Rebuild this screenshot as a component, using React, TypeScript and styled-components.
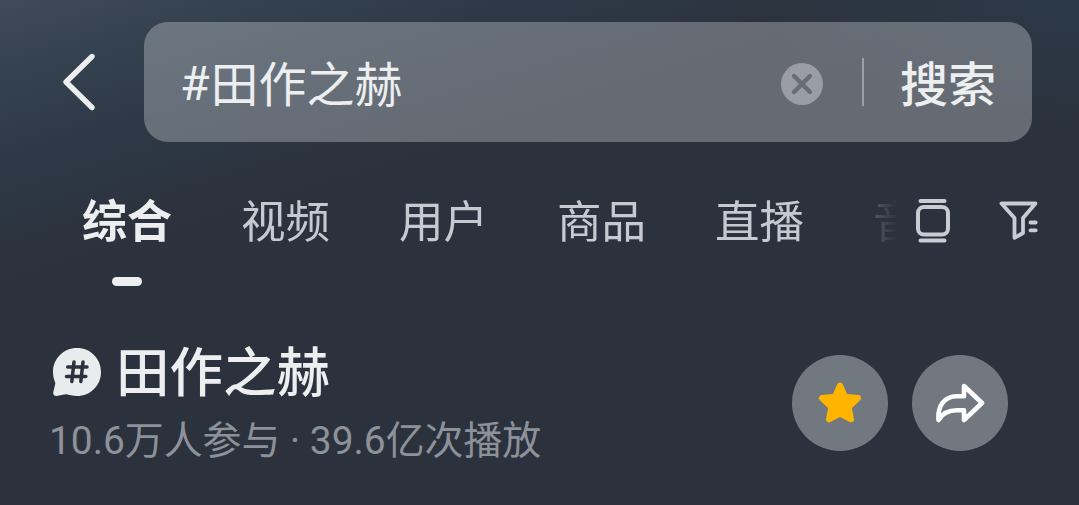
import styled, { createGlobalStyle } from "styled-components";

const tabs = ["综合", "视频", "用户", "商品", "直播", "音"]

function App() {
  const activeTab = 0;

  return (
    <Page>
      <GlobalStyle />
      <SearchRow>
        <BackButton aria-label="返回">
          <svg width="36" height="60" viewBox="0 0 36 60" fill="none" stroke="#eceef0" strokeWidth="5.4" strokeLinecap="round" strokeLinejoin="round">
            <path d="M32 4.5 6 30 32 55.5" />
          </svg>
        </BackButton>
        <SearchBox>
          <Keyword><Hash>#</Hash>田作之赫</Keyword>
          <ClearButton aria-label="清除">
            <svg width="42" height="42" viewBox="0 0 42 42" fill="none">
              <circle cx="21" cy="21" r="21" fill="#9a9da6" />
              <path d="M13 13 29 29M29 13 13 29" stroke="#676d76" strokeWidth="4.4" strokeLinecap="round" />
            </svg>
          </ClearButton>
          <Divider />
          <SearchButton>搜索</SearchButton>
        </SearchBox>
      </SearchRow>

      <TabRow>
        <TabList>
          {tabs.map((tab, index) => (
            <Tab key={tab} $active={index === activeTab}>{tab}</Tab>
          ))}
        </TabList>
        <TabTools>
          <svg width="36" height="46" viewBox="0 0 36 46" fill="none" stroke="#c9ccd2" strokeWidth="4">
            <path d="M5.5 3H29.5M5.5 42.6H29.5" strokeLinecap="round" />
            <rect x="3" y="9" width="30" height="27.6" rx="6" />
          </svg>
          <svg width="42" height="42" viewBox="0 0 42 42" fill="none" stroke="#c9ccd2" strokeWidth="3.8" strokeLinecap="round" strokeLinejoin="round">
            <path d="M3.5 3.5H37.5L25 18V33L16.5 37.8V18Z" />
            <path d="M32.5 22.5H37.7M32.5 30.3H37.7" />
          </svg>
        </TabTools>
      </TabRow>

      <TopicRow>
        <TopicInfo>
          <TopicTitle>
            <svg width="50" height="50" viewBox="0 0 50 50">
              <path d="M25 1C38.5 1 49 11.5 49 25S38.5 49 25 49C20.5 49 17 47.7 14.5 47.2C11.5 47.3 8 48.6 4.5 49C2 49.1 .8 47.2 1.3 45C1.9 42 3.2 38.5 3.3 36C1.9 32.5 1 29 1 25C1 11.5 11.5 1 25 1Z" fill="#e9ebed" />
              <path d="M22 15 19.8 34.5M31 15 28.8 34.5M15.7 20H35M14.5 29.5H33.8" fill="none" stroke="#2b323d" strokeWidth="3.5" strokeLinecap="round" />
            </svg>
            <h1>田作之赫</h1>
          </TopicTitle>
          <TopicStats>10.6万人参与 · 39.6亿次播放</TopicStats>
        </TopicInfo>
        <TopicActions>
          <RoundButton aria-label="收藏">
            <svg width="44" height="44" viewBox="0 0 44 44" fill="#ffb400" stroke="#ffb400" strokeWidth="6" strokeLinejoin="round">
              <path d="M22 4.5 27 15.8 40 17 30.6 26.2 33 38.3 22 32.5 11 38.3 13.4 26.2 4 17 17 15.8Z" />
            </svg>
          </RoundButton>
          <RoundButton aria-label="分享">
            <svg width="50" height="42" viewBox="0 0 50 42" fill="none" stroke="#fff" strokeWidth="4.6" strokeLinejoin="round" strokeLinecap="round">
              <path d="M29 4 47 21 29 38V28.3H22C14 28.3 7.5 31 3.5 38C2.5 24 9 14.3 22 14.3H29Z" />
            </svg>
          </RoundButton>
        </TopicActions>
      </TopicRow>
    </Page>
  )
}

const GlobalStyle = createGlobalStyle`
  * {
    box-sizing: border-box;
  }

  body {
    margin: 0;
    background: #2b323d;
  }

  button {
    padding: 0;
    border: none;
    background: none;
    color: inherit;
    font: inherit;
  }

  svg {
    display: block;
    flex: none;
  }
`;

const Page = styled.div`
  width: 100%;
  height: 505px;
  padding-top: 22px;
  overflow: hidden;
  display: flex;
  flex-direction: column;
  font-family: Roboto, "Noto Sans CJK SC", sans-serif;
  color: #eceef0;
  white-space: nowrap;
  background:
    radial-gradient(ellipse 330px 130px at 100% 0, #2b3947 0%, rgba(43, 57, 71, 0) 100%),
    linear-gradient(163deg, #3f4a5b 0, #35424f 70px, #2d3947 155px, #2c333f 240px, #2b323d 330px);
`;

const SearchRow = styled.div`
  height: 120px;
  display: flex;
  align-items: center;
  padding: 0 47px 0 60px;
`;

const BackButton = styled.button`
  width: 84px;
`;

const SearchBox = styled.div`
  flex: 1;
  height: 120px;
  display: flex;
  align-items: center;
  padding: 0 36px;
  border-radius: 24px;
  background: rgba(255, 255, 255, 0.28);
`;

const Keyword = styled.span`
  flex: 1;
  padding-top: 7px;
  font-size: 48px;
  line-height: 60px;
`;

const Hash = styled.span`
  margin-right: 1px;
  line-height: 1;
  vertical-align: 2px;
`;

const ClearButton = styled.button`
  margin-top: 4px;
`;

const Divider = styled.div`
  width: 2px;
  height: 48px;
  margin: 0 36px 0 39px;
  background: #9da0a8;
`;

const SearchButton = styled.button`
  padding-top: 7px;
  font-size: 48px;
  font-weight: 500;
  line-height: 60px;
`;

const TabRow = styled.div`
  height: 164px;
  display: flex;
  padding: 51px 39px 0 82px;
`;

const TabList = styled.div`
  width: 835px;
  height: 100px;
  display: flex;
  gap: 69px;
  overflow: hidden;
  mask-image: linear-gradient(to right, #000 725px, rgba(0, 0, 0, 0.25) 792px, transparent 816px);
`;

const Tab = styled.div<{ $active: boolean }>`
  flex: none;
  display: flex;
  flex-direction: column;
  align-items: center;
  font-size: ${({ $active }) => ($active ? 45 : 44.5)}px;
  line-height: 60px;
  font-weight: ${({ $active }) => ($active ? 700 : 400)};
  color: ${({ $active }) => ($active ? "#eceef0" : "#c6c9cf")};

  &::after {
    content: "";
    width: 30px;
    height: 9px;
    margin-top: 24px;
    border-radius: 5px;
    background: ${({ $active }) => ($active ? "#eceef0" : "transparent")};
  }
`;

const TabTools = styled.div`
  flex: 1;
  height: 56px;
  display: flex;
  align-items: center;
  justify-content: space-between;
  margin-left: -2px;
`;

const TopicRow = styled.div`
  display: flex;
  justify-content: space-between;
  padding: 33px 71px 0 49px;
`;

const TopicInfo = styled.div`
  display: flex;
  flex-direction: column;
`;

const TopicTitle = styled.div`
  height: 66px;
  display: flex;
  align-items: center;
  gap: 14px;
  padding-left: 3px;

  h1 {
    margin: 0;
    padding-top: 4px;
    font-size: 53.5px;
    font-weight: 500;
    line-height: 66px;
  }
`;

const TopicStats = styled.div`
  font-size: 38.9px;
  line-height: 54px;
  margin-top: 9px;
  color: #8d9199;
`;

const TopicActions = styled.div`
  display: flex;
  gap: 24px;
  padding-top: 16px;
`;

const RoundButton = styled.button`
  width: 96px;
  height: 96px;
  display: flex;
  align-items: center;
  justify-content: center;
  border-radius: 50%;
  background: #727880;
`;

export default App
